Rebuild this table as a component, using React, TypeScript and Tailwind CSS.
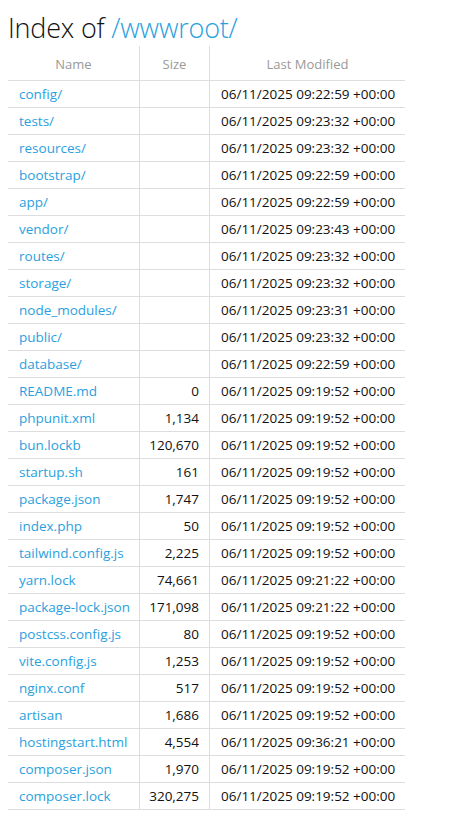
import React from "react";

const rows: [string, string, string][] = [
  ["config/", "", "06/11/2025 09:22:59 +00:00"],
  ["tests/", "", "06/11/2025 09:23:32 +00:00"],
  ["resources/", "", "06/11/2025 09:23:32 +00:00"],
  ["bootstrap/", "", "06/11/2025 09:22:59 +00:00"],
  ["app/", "", "06/11/2025 09:22:59 +00:00"],
  ["vendor/", "", "06/11/2025 09:23:43 +00:00"],
  ["routes/", "", "06/11/2025 09:23:32 +00:00"],
  ["storage/", "", "06/11/2025 09:23:32 +00:00"],
  ["node_modules/", "", "06/11/2025 09:23:31 +00:00"],
  ["public/", "", "06/11/2025 09:23:32 +00:00"],
  ["database/", "", "06/11/2025 09:22:59 +00:00"],
  ["README.md", "0", "06/11/2025 09:19:52 +00:00"],
  ["phpunit.xml", "1,134", "06/11/2025 09:19:52 +00:00"],
  ["bun.lockb", "120,670", "06/11/2025 09:19:52 +00:00"],
  ["startup.sh", "161", "06/11/2025 09:19:52 +00:00"],
  ["package.json", "1,747", "06/11/2025 09:19:52 +00:00"],
  ["index.php", "50", "06/11/2025 09:19:52 +00:00"],
  ["tailwind.config.js", "2,225", "06/11/2025 09:19:52 +00:00"],
  ["yarn.lock", "74,661", "06/11/2025 09:21:22 +00:00"],
  ["package-lock.json", "171,098", "06/11/2025 09:21:22 +00:00"],
  ["postcss.config.js", "80", "06/11/2025 09:19:52 +00:00"],
  ["vite.config.js", "1,253", "06/11/2025 09:19:52 +00:00"],
  ["nginx.conf", "517", "06/11/2025 09:19:52 +00:00"],
  ["artisan", "1,686", "06/11/2025 09:19:52 +00:00"],
  ["hostingstart.html", "4,554", "06/11/2025 09:36:21 +00:00"],
  ["composer.json", "1,970", "06/11/2025 09:19:52 +00:00"],
  ["composer.lock", "320,275", "06/11/2025 09:19:52 +00:00"],
];

export default function App() {
  return (
    <div
      className="bg-white px-2 pb-6 text-[#111]"
      style={{ fontFamily: '"Open Sans", "Noto Sans", sans-serif' }}
    >
      <h1 className="pt-[10px] text-[27px] font-light leading-[36px] tracking-[-0.2px] text-[#111]">
        Index of <span className="text-[#2a9fe0]">/wwwroot/</span>
      </h1>
      <div className="w-[397px]">
        <div className="flex h-[35px] border-b border-[#dddddd] text-[13px] text-[#999999]">
          <div className="flex w-[132px] items-end justify-center border-r border-[#dddddd] pb-[6px]">Name</div>
          <div className="flex w-[70px] items-end justify-center border-r border-[#dddddd] pb-[6px]">Size</div>
          <div className="flex flex-1 items-end justify-center pb-[6px]">Last Modified</div>
        </div>
        {rows.map(([n, s, d]) => (
          <div key={n} className="flex h-[27px] border-b border-[#dddddd] text-[13.5px]">
            <div className="flex w-[132px] items-center border-r border-[#dddddd] pl-[11px] text-[#2a9fe0]">{n}</div>
            <div className="flex w-[70px] items-center justify-end border-r border-[#dddddd] pr-[10px]">{s}</div>
            <div className="flex flex-1 items-center pl-[11px]">{d}</div>
          </div>
        ))}
      </div>
    </div>
  );
}
